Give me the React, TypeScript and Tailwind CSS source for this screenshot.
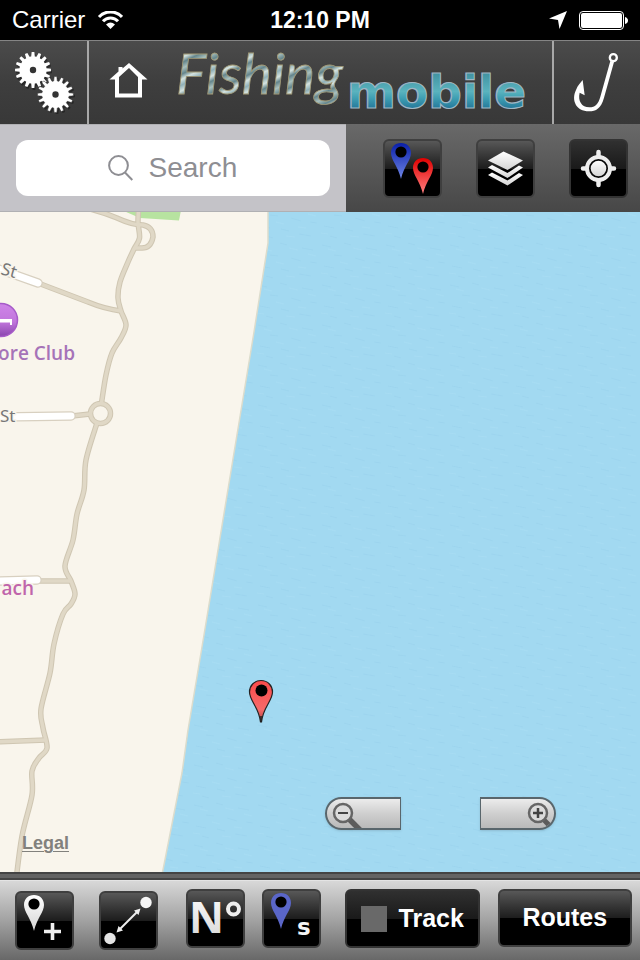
import React from "react";

const glossy =
  "flex shrink-0 items-center justify-center overflow-hidden rounded-md border-2 border-[#3f3f3f] bg-linear-to-b from-[#585858] from-0% via-[#1d1d1d] via-50% to-black to-50%";
const glossyDark =
  "flex shrink-0 items-center justify-center overflow-hidden rounded-md border-2 border-[#333333] bg-linear-to-b from-[#303030] from-0% via-[#1a1a1a] via-50% to-black to-50%";
const square = "size-[59px]";

function gearPoints(cx: number, cy: number, outer: number, inner: number, teeth: number) {
  const pts: string[] = [];
  for (let i = 0; i < teeth; i++) {
    const a = (i / teeth) * Math.PI * 2;
    const step = (Math.PI * 2) / teeth;
    const marks: [number, number][] = [
      [-0.34, inner],
      [-0.19, outer],
      [0.19, outer],
      [0.34, inner],
    ];
    marks.forEach(([o, r]) => {
      pts.push(`${(cx + r * Math.cos(a + o * step)).toFixed(2)},${(cy + r * Math.sin(a + o * step)).toFixed(2)}`);
    });
  }
  return pts.join(" ");
}

// Smooth curve through a list of road points (Catmull-Rom as cubic Béziers).
function smooth(points: [number, number][]) {
  let d = `M${points[0][0]} ${points[0][1]}`;
  for (let i = 0; i < points.length - 1; i++) {
    const p0 = points[Math.max(i - 1, 0)];
    const p1 = points[i];
    const p2 = points[i + 1];
    const p3 = points[Math.min(i + 2, points.length - 1)];
    d += ` C${p1[0] + (p2[0] - p0[0]) / 6} ${p1[1] + (p2[1] - p0[1]) / 6} ${p2[0] - (p3[0] - p1[0]) / 6} ${
      p2[1] - (p3[1] - p1[1]) / 6
    } ${p2[0]} ${p2[1]}`;
  }
  return d;
}

function SharedGradients() {
  return (
    <svg className="absolute size-0" aria-hidden="true">
      <defs>
        <linearGradient id="silver" x1="0" y1="0" x2="0" y2="1">
          <stop offset="0" stopColor="#fff" />
          <stop offset="1" stopColor="#d4d4d4" />
        </linearGradient>
        <linearGradient id="blue" x1="0" y1="0" x2="0" y2="1">
          <stop offset="0" stopColor="#0a1fa8" />
          <stop offset="1" stopColor="#6f86e6" />
        </linearGradient>
        <linearGradient id="red" x1="0" y1="0" x2="0" y2="1">
          <stop offset="0" stopColor="#e00000" />
          <stop offset="1" stopColor="#ff8080" />
        </linearGradient>
        <linearGradient id="marker" x1="0" y1="0" x2="0" y2="1">
          <stop offset="0" stopColor="#fb4a4a" />
          <stop offset="0.7" stopColor="#f56a6a" />
          <stop offset="1" stopColor="#b04040" />
        </linearGradient>
        <linearGradient id="poi" x1="0" y1="0" x2="0" y2="1">
          <stop offset="0" stopColor="#cf84e8" />
          <stop offset="0.55" stopColor="#c176dc" />
          <stop offset="1" stopColor="#8a45ae" />
        </linearGradient>
        <linearGradient id="foil" x1="0" y1="0" x2="0.12" y2="0.1" spreadMethod="reflect">
          <stop offset="0" stopColor="#a9c0bd" />
          <stop offset="0.35" stopColor="#64858c" />
          <stop offset="0.65" stopColor="#d5e3df" />
          <stop offset="1" stopColor="#8fb0b8" />
        </linearGradient>
        <linearGradient id="aqua" x1="0" y1="0" x2="0" y2="1">
          <stop offset="0.1" stopColor="#3c8c9c" />
          <stop offset="0.5" stopColor="#5ab3be" />
          <stop offset="0.62" stopColor="#3f9fb3" />
          <stop offset="0.85" stopColor="#1f6f94" />
        </linearGradient>
      </defs>
    </svg>
  );
}

function Pin({ x, y, fill }: { x: number; y: number; fill: string }) {
  return (
    <g transform={`translate(${x} ${y})`}>
      <path d="M0 -10 C6 -10 10 -6 10 0 C10 7 3 13 0 26 C-3 13 -10 7 -10 0 C-10 -6 -6 -10 0 -10 Z" fill={fill} />
      <circle cx="0" cy="-1" r="5.6" fill="#000" />
    </g>
  );
}

function StatusBar() {
  return (
    <div className="grid h-10 grid-cols-3 items-center bg-black px-3 text-white">
      <div className="flex items-center gap-3">
        <span className="text-2xl">Carrier</span>
        <svg width="26" height="18" viewBox="0 0 26 18" aria-label="Wi-Fi">
          <path d="M2 6 A15.5 15.500 0 0 1 25 6" fill="none" stroke="#fff" strokeWidth="3" />
          <path d="M6 10.300 A10 10 0 0 1 21 10.300" fill="none" stroke="#fff" strokeWidth="3" />
          <path d="M13.500 18 L9 13.500 Q13.500 9.500 18 13.500 Z" fill="#fff" />
        </svg>
      </div>
      <span className="text-center text-[23px] font-bold">12:10 PM</span>
      <div className="flex items-center justify-end gap-3">
        <svg width="18" height="18" viewBox="0 0 18 18" aria-label="Location">
          <path d="M18 0 L10.5 18 L9 9 L0 7.5 Z" fill="#fff" />
        </svg>
        <svg width="49" height="19" viewBox="0 0 49 19" aria-label="Battery">
          <rect x="0.5" y="0.5" width="44" height="18" rx="3.5" fill="none" stroke="#fff" />
          <rect x="2" y="2" width="41" height="15" rx="2" fill="#fff" />
          <path d="M46 6 Q49 7 49 9.5 Q49 12 46 13 Z" fill="#fff" />
        </svg>
      </div>
    </div>
  );
}

function Header() {
  return (
    <header className="flex h-21 border-t border-[#858585] bg-linear-to-b from-[#4b4b4b] via-[#3e3e3e] via-50% to-[#383838]">
      <button aria-label="Settings" className="w-[89px] shrink-0 border-r-2 border-[#a8a8a8]">
        <svg width="87" height="83" viewBox="0 41 87 83">
          <g fill="#000" opacity="0.35">
            <polygon points={gearPoints(34, 72, 18, 14, 16)} />
            <polygon points={gearPoints(57, 96, 18, 14, 16)} />
          </g>
          <polygon points={gearPoints(33, 70, 18, 13.6, 16)} fill="#fff" />
          <circle cx="33" cy="70" r="3.2" fill="#333" />
          <polygon points={gearPoints(55.5, 94.5, 18, 13.6, 16)} fill="#fff" stroke="#3e3e3e" strokeWidth="0.6" />
          <circle cx="55.5" cy="94.5" r="3.2" fill="#333" />
        </svg>
      </button>
      <div className="flex flex-1 items-center">
        <button aria-label="Home" className="w-20 shrink-0">
          <svg width="80" height="83" viewBox="89 42 80 83">
            <path
              fill="#fff"
              fillRule="evenodd"
              d="M129 64 L147.500 80.500 H142 V98.500 H115 V80.500 H109.500 L118.500 72.500 V68 H122.500 V69.500 Z M129 69 L119 78 V94.500 H138 V78 Z"
            />
          </svg>
        </button>
        <svg className="overflow-visible" width="370" height="83" viewBox="169 41 370 83" role="img" aria-label="Fishing mobile">
          <text
            x="176"
            y="94"
            fontFamily="Lato, sans-serif"
            fontStyle="italic"
            fontSize="57"
            fill="url(#foil)"
            stroke="#a39a76"
            strokeWidth="0.8"
          >
            Fishing
          </text>
          <text
            x="347"
            y="108"
            fontFamily="DejaVu Sans, sans-serif"
            fontWeight="bold"
            fontSize="47"
            fill="url(#aqua)"
            stroke="#9fb6c4"
            strokeWidth="1.2"
          >
            mobile
          </text>
        </svg>
      </div>
      <button aria-label="Catches" className="w-[88px] shrink-0 border-l-2 border-[#a8a8a8]">
        <svg width="86" height="83" viewBox="42 123 258 249">
          <circle cx="220" cy="173" r="10.500" fill="none" stroke="#fff" strokeWidth="7" />
          <path
            fill="#fff"
            d="M222 186 L192 293 C183 325 168 334 147 334 C108 334 93 300 108 270 C113 256 122 248 128 240 L134 286 L119 278 C113 302 125 322 148 322 C166 322 175 312 181 290 L211 183 Z"
          />
        </svg>
      </button>
    </header>
  );
}

function Toolbar() {
  return (
    <div className="flex h-22">
      <div className="flex-1 border-y border-[#b0b0b3] bg-[#c4c3c8] px-4 py-[15px]">
        <label className="flex h-14 items-center justify-center gap-4 rounded-xl bg-white">
          <svg width="25" height="26" viewBox="0 0 25 26" fill="none" stroke="#8e8e93" strokeWidth="2">
            <circle cx="10.500" cy="10.500" r="9.400" />
            <path d="M17 17.500 L24.300 25" />
          </svg>
          <input
            type="text"
            aria-label="Search"
            placeholder="Search"
            className="w-[90px] bg-transparent text-[28px] text-[#8e8e93] outline-none placeholder:text-[#8e8e93]"
          />
        </label>
      </div>
      <div className="flex items-center justify-end gap-[34px] bg-linear-to-b from-[#696969] to-[#474747] pr-3 pl-[37px]">
        <button aria-label="Markers" className={`${glossy} ${square}`}>
          <svg className="shrink-0" width="59" height="59" viewBox="0 0 59 59">
            <Pin x={18} y={14} fill="url(#blue)" />
            <Pin x={40} y={29} fill="url(#red)" />
          </svg>
        </button>
        <button aria-label="Layers" className={`${glossy} ${square}`}>
          <svg className="shrink-0" width="59" height="59" viewBox="0 0 59 59" fill="url(#silver)">
            <path d="M27.500 12.500 L47 21.500 L31.500 31 L12 21.500 Z" />
            <path d="M12 28.500 L16 26 L31.500 34 L43 26.500 L47 28.500 L31.500 39 Z" />
            <path d="M12 36 L16 33.500 L31.500 41.500 L43 34 L47 36 L31.500 46.500 Z" />
          </svg>
        </button>
        <button aria-label="My location" className={`${glossyDark} ${square}`}>
          <svg className="shrink-0" width="59" height="59" viewBox="0 0 59 59">
            <path d="M29.500 13 V46 M14 29.500 H45" stroke="#eee" strokeWidth="4.500" strokeLinecap="round" />
            <circle cx="29.500" cy="29.500" r="11.500" fill="#080808" stroke="#ededed" strokeWidth="4" />
            <circle cx="29.500" cy="29.500" r="7.800" fill="url(#silver)" />
          </svg>
        </button>
      </div>
    </div>
  );
}

const coastRoad =
  smooth([
    [139, 203], [138, 222], [139.5, 238], [134, 249], [128, 262], [120, 282], [118, 298], [121, 311], [126, 325],
    [121, 338], [112, 353], [106, 375], [101.5, 403],
  ]) +
  smooth([
    [97, 423], [86, 460], [84, 490], [77, 514], [73, 540], [65, 566], [71, 581], [75, 594], [71, 604], [63, 614],
    [54, 644], [50, 673], [41, 709], [43, 728], [47, 748], [39, 758], [32, 771], [32, 795], [22, 836], [16, 880],
  ]);
const sideRoads =
  "M90 209 Q105 213 117 218 Q132 225 143 225 Q153 227 153 237 Q151 248 142 248 H135 M38 283 L88 302 Q105 309 121 311 M72 416 L90 414 M36 581 H71 M-4 742 L46 740";
const streets = "M-4 268 L38 283 M-4 417 L71 416 M-4 581 L37 580";

function MapView() {
  return (
    <main className="relative min-h-[480px] flex-1 overflow-hidden bg-[#a2d9f1]">
      <svg className="absolute inset-0 size-full" viewBox="0 212 640 660" preserveAspectRatio="xMinYMin slice">
        <defs>
          <pattern id="ripples" width="64" height="40" patternUnits="userSpaceOnUse">
            <path
              d="M2 5 l9 2 M24 3 l7 2 M46 8 l11 2 M14 15 l8 1 M35 18 l10 3 M54 22 l7 1 M4 26 l10 2 M25 29 l8 2 M43 34 l12 2 M10 36 l7 2"
              stroke="#92cce8"
              strokeWidth="1"
              opacity="0.35"
              fill="none"
            />
            <path
              d="M8 9 l8 2 M33 8 l9 2 M52 14 l8 2 M20 22 l8 2 M42 27 l8 1 M1 33 l7 1 M30 36 l9 1"
              stroke="#b0e1f6"
              strokeWidth="1"
              opacity="0.4"
              fill="none"
            />
          </pattern>
        </defs>
        <rect y="212" width="640" height="660" fill="url(#ripples)" />
        <path
          d="M-5 205 H268 L268 243 L254 332 L232 465 L204 635 L188 730 L182 773 L162 875 H-5 Z"
          fill="#f9f5ec"
          stroke="#dcdccc"
          strokeWidth="1.500"
        />
        <path d="M110 205 H182 L179 220.500 L140 218 Z" fill="#b7e3a0" />
        <g fill="none" strokeLinejoin="round">
          <g stroke="#cfc6b2" strokeWidth="5.500">
            <path d={coastRoad} />
            <path d={sideRoads} />
            <circle cx="100.500" cy="413.500" r="10" />
          </g>
          <g stroke="#e0d8c6" strokeWidth="3.500">
            <path d={coastRoad} />
            <path d={sideRoads} />
            <circle cx="100.500" cy="413.500" r="10" />
          </g>
          <path d={streets} stroke="#d8d0c0" strokeWidth="9.500" strokeLinecap="round" />
          <path d={streets} stroke="#fff" strokeWidth="7" strokeLinecap="round" />
        </g>
        <circle cx="1" cy="320" r="16.500" fill="url(#poi)" stroke="#a65bc8" strokeWidth="1.500" />
        <path d="M-2 319 H12 V325 H10 V322.500 H-2 Z" fill="#fff" />
        <g stroke="#f9f5ec" strokeWidth="3" paintOrder="stroke" strokeLinejoin="round">
          <g fontFamily="Noto Sans, sans-serif" fontSize="17" fill="#777">
            <text x="0" y="274" transform="rotate(16 0 274)">St</text>
            <text x="0" y="422">St</text>
          </g>
          <g fontFamily="Open Sans, sans-serif" fontWeight="600" fontSize="19">
            <text x="75" y="360" textAnchor="end" fill="#a673b8">ore Club</text>
            <text x="34" y="595" textAnchor="end" fill="#c065ab">ach</text>
          </g>
        </g>
        <path
          d="M261 680.500 C268 680.500 272.500 686 272.500 692 C272.500 701 263 707 261.500 722 H260.500 C259 707 249.500 701 249.500 692 C249.500 686 254 680.500 261 680.500 Z"
          fill="url(#marker)"
          stroke="#222"
          strokeWidth="1.200"
        />
        <path d="M261 716 V722" stroke="#222" strokeWidth="1.500" />
        <circle cx="261.500" cy="690.500" r="6" fill="#000" />
      </svg>
      <a href="#legal" className="absolute bottom-[19px] left-[22px] text-lg leading-5 font-bold text-[#82817d] underline decoration-1 underline-offset-2">
        Legal
      </a>
      <div className="absolute right-[84px] bottom-[42px] flex gap-[79px]">
        <button
          aria-label="Zoom out"
          className="h-[33px] w-[76px] overflow-hidden rounded-l-full border-2 border-r border-[#59666c] bg-linear-to-b from-[#ececec] via-[#cfcfcf] to-[#b9b9b9] shadow-sm"
        >
          <svg width="40" height="29" viewBox="0 0 40 29">
            <path d="M22 20 L33 31" stroke="#5c5c5c" strokeWidth="5.500" />
            <circle cx="16" cy="14" r="9" fill="#dcdcdc" stroke="#666" strokeWidth="2.500" />
            <path d="M11 14 H21" stroke="#444" strokeWidth="2" />
          </svg>
        </button>
        <button
          aria-label="Zoom in"
          className="flex h-[33px] w-[76px] justify-end overflow-hidden rounded-r-full border-2 border-l border-[#59666c] bg-linear-to-b from-[#ececec] via-[#cfcfcf] to-[#b9b9b9] shadow-sm"
        >
          <svg width="40" height="29" viewBox="0 0 40 29">
            <path d="M29 20 L38 29" stroke="#5c5c5c" strokeWidth="5" />
            <circle cx="24" cy="14" r="9" fill="#dcdcdc" stroke="#666" strokeWidth="2.500" />
            <path d="M19 14 H29 M24 9 V19" stroke="#444" strokeWidth="2.500" />
          </svg>
        </button>
      </div>
    </main>
  );
}

function BottomBar() {
  return (
    <footer>
      <div className="h-2 border-y-2 border-[#444] bg-[#636363]" />
      <div className="flex h-20 items-start gap-6 border-t border-[#e4e4e4] bg-linear-to-b from-[#d8d8d8] via-[#a2a2a2] to-[#686868] pt-2 pr-2 pl-[15px]">
        <div className="flex gap-7">
          <div className="flex gap-[25px] pt-0.5">
            <button aria-label="Add marker" className={`${glossy} ${square}`}>
              <svg className="shrink-0" width="59" height="59" viewBox="0 0 59 59">
                <Pin x={19} y={14} fill="url(#silver)" />
                <path d="M37.500 32 V49 M29 40.500 H46" stroke="#eee" strokeWidth="3.600" />
              </svg>
            </button>
            <button aria-label="Measure distance" className={`${glossy} ${square}`}>
              <svg className="shrink-0" width="59" height="59" viewBox="0 0 59 59">
                <circle cx="47" cy="11.500" r="5.700" fill="#f6f6f6" />
                <circle cx="11" cy="47.500" r="5.700" fill="#e4e4e4" />
                <path d="M20 39 L39 20" stroke="#eee" strokeWidth="2" />
                <path d="M41.500 17.500 L35 19.500 L39.500 24 Z M17.500 41.500 L19.500 35 L24 39.500 Z" fill="#eee" />
              </svg>
            </button>
          </div>
          <div className="flex gap-[17px]">
            <button aria-label="Marker number" className={`${glossy} ${square}`}>
              <svg className="shrink-0" width="59" height="59" viewBox="0 0 59 59">
                <text x="3" y="44" fontFamily="Noto Sans, sans-serif" fontWeight="bold" fontSize="43" fill="url(#silver)">N</text>
                <circle cx="47.500" cy="20" r="5.500" fill="none" stroke="#eee" strokeWidth="4" />
              </svg>
            </button>
            <button aria-label="Saved markers" className={`${glossy} ${square}`}>
              <svg className="shrink-0" width="59" height="59" viewBox="0 0 59 59">
                <Pin x={19} y={14} fill="#5a66c8" />
                <text x="35" y="46" fontFamily="DejaVu Sans, sans-serif" fontWeight="bold" fontSize="23" fill="#f4f4f4">s</text>
              </svg>
            </button>
          </div>
        </div>
        <div className="flex flex-1 gap-[18px]">
          <label className={`${glossyDark} h-[59px] flex-1 gap-3 text-[25px] font-bold text-white`}>
            <input type="checkbox" className="size-[26px] appearance-none bg-[#696969] checked:bg-[#4c9c4c]" />
            Track
          </label>
          <button className={`${glossy} h-[58px] flex-1 text-[25px] font-bold text-white`}>Routes</button>
        </div>
      </div>
    </footer>
  );
}

export default function App() {
  return (
    <div className="flex min-h-screen flex-col font-['Liberation_Sans',Arial,sans-serif]">
      <SharedGradients />
      <StatusBar />
      <Header />
      <Toolbar />
      <MapView />
      <BottomBar />
    </div>
  );
}
